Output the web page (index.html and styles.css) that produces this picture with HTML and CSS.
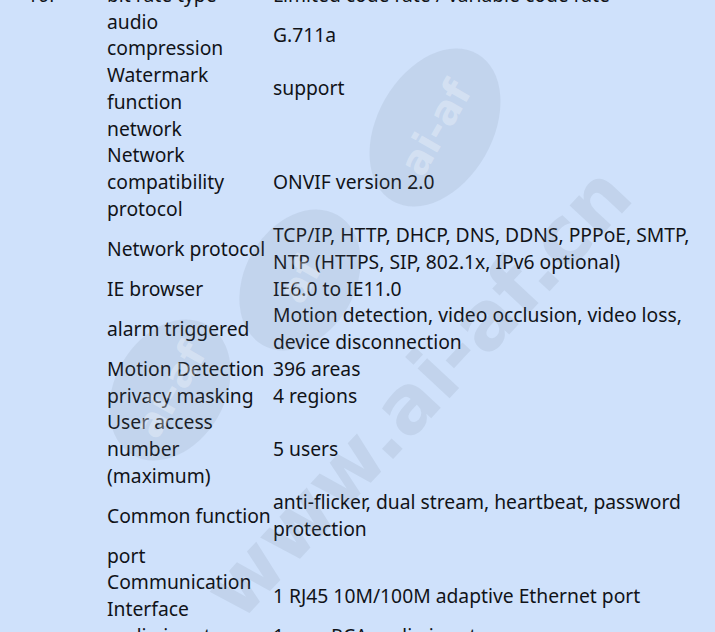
FILE: index.html
```html
<!DOCTYPE html>
<html lang="en">
<head>
    <meta charset="UTF-8">
    <meta name="viewport" content="width=device-width, initial-scale=1.0">
    <title>Specifications</title>
    <link rel="stylesheet" href="styles.css">
</head>
<body>
    <div class="page">
        <table class="specTable">
            <colgroup>
                <col class="colGroup">
                <col class="colName">
                <col class="colValue">
            </colgroup>
            <tbody>
                <tr>
                    <td class="groupCell" rowspan="20">10P</td>
                    <td>bit rate type</td>
                    <td>Limited code rate / variable code rate</td>
                </tr>
                <tr>
                    <td>audio compression</td>
                    <td>G.711a</td>
                </tr>
                <tr>
                    <td>Watermark function</td>
                    <td>support</td>
                </tr>
                <tr>
                    <td>network</td>
                    <td></td>
                </tr>
                <tr>
                    <td>Network compatibility protocol</td>
                    <td>ONVIF version 2.0</td>
                </tr>
                <tr>
                    <td>Network protocol</td>
                    <td>TCP/IP, HTTP, DHCP, DNS, DDNS, PPPoE, SMTP, NTP (HTTPS, SIP, 802.1x, IPv6 optional)</td>
                </tr>
                <tr>
                    <td>IE browser</td>
                    <td>IE6.0 to IE11.0</td>
                </tr>
                <tr>
                    <td>alarm triggered</td>
                    <td>Motion detection, video occlusion, video loss, device disconnection</td>
                </tr>
                <tr>
                    <td>Motion Detection</td>
                    <td>396 areas</td>
                </tr>
                <tr>
                    <td>privacy masking</td>
                    <td>4 regions</td>
                </tr>
                <tr>
                    <td>User access number (maximum)</td>
                    <td>5 users</td>
                </tr>
                <tr>
                    <td>Common function</td>
                    <td>anti-flicker, dual stream, heartbeat, password protection</td>
                </tr>
                <tr>
                    <td>port</td>
                    <td></td>
                </tr>
                <tr>
                    <td>Communication Interface</td>
                    <td>1 RJ45 10M/100M adaptive Ethernet port</td>
                </tr>
                <tr>
                    <td>audio input</td>
                    <td>1-way RCA audio input</td>
                </tr>
            </tbody>
        </table>

        <!-- watermark -->
        <div class="watermark">
            <div class="blob blobA"><span>ai-af</span></div>
            <div class="blob blobB"><span>af</span></div>
            <div class="blob blobC"><span>ai-af</span></div>
            <div class="wmText">www.ai-af.cn</div>
        </div>
    </div>
</body>
</html>
```

FILE: styles.css
```css
* {
  box-sizing: border-box;
  margin: 0;
  padding: 0;
}

html, body {
  height: 100%;
  overflow: hidden;
}

body {
  background-color: #cfe1fb;
  font-family: "Noto Sans", "Open Sans", sans-serif;
  font-size: 19.3px;
  color: #111318;
}

.page {
  position: relative;
  height: 100%;
  overflow: hidden;
}

.specTable {
  width: 693px;
  table-layout: fixed;
  border-collapse: collapse;
  margin-top: -18px;
}

.colGroup {
  width: 107px;
}

.colName {
  width: 166px;
}

.colValue {
  width: 420px;
}

.specTable td {
  padding: 0;
  line-height: 26.7px;
  vertical-align: middle;
  text-align: left;
}

.specTable td.groupCell {
  vertical-align: top;
  padding-left: 27px;
}

.watermark {
  position: absolute;
  inset: 0;
  pointer-events: none;
}

.blob {
  position: absolute;
  border-radius: 50%;
  background-color: rgba(110, 120, 140, 0.12);
  display: flex;
  align-items: center;
  justify-content: center;
}

.blob span {
  color: rgba(255, 255, 255, 0.3);
  font-family: "DejaVu Sans", sans-serif;
  font-weight: bold;
  font-size: 40px;
}

.blobA {
  left: 350px;
  top: 70px;
  width: 170px;
  height: 115px;
  transform: rotate(-60deg);
}

.blobB {
  left: 225px;
  top: 225px;
  width: 150px;
  height: 110px;
  transform: rotate(-60deg);
}

.blobC {
  left: 95px;
  top: 335px;
  width: 150px;
  height: 110px;
  transform: rotate(-60deg);
}

.wmText {
  position: absolute;
  left: 220px;
  top: 560px;
  font-family: "DejaVu Sans", sans-serif;
  font-weight: bold;
  font-size: 80px;
  line-height: 90px;
  color: rgba(110, 120, 140, 0.13);
  transform: rotate(-47deg);
  transform-origin: left center;
  white-space: nowrap;
}
```
